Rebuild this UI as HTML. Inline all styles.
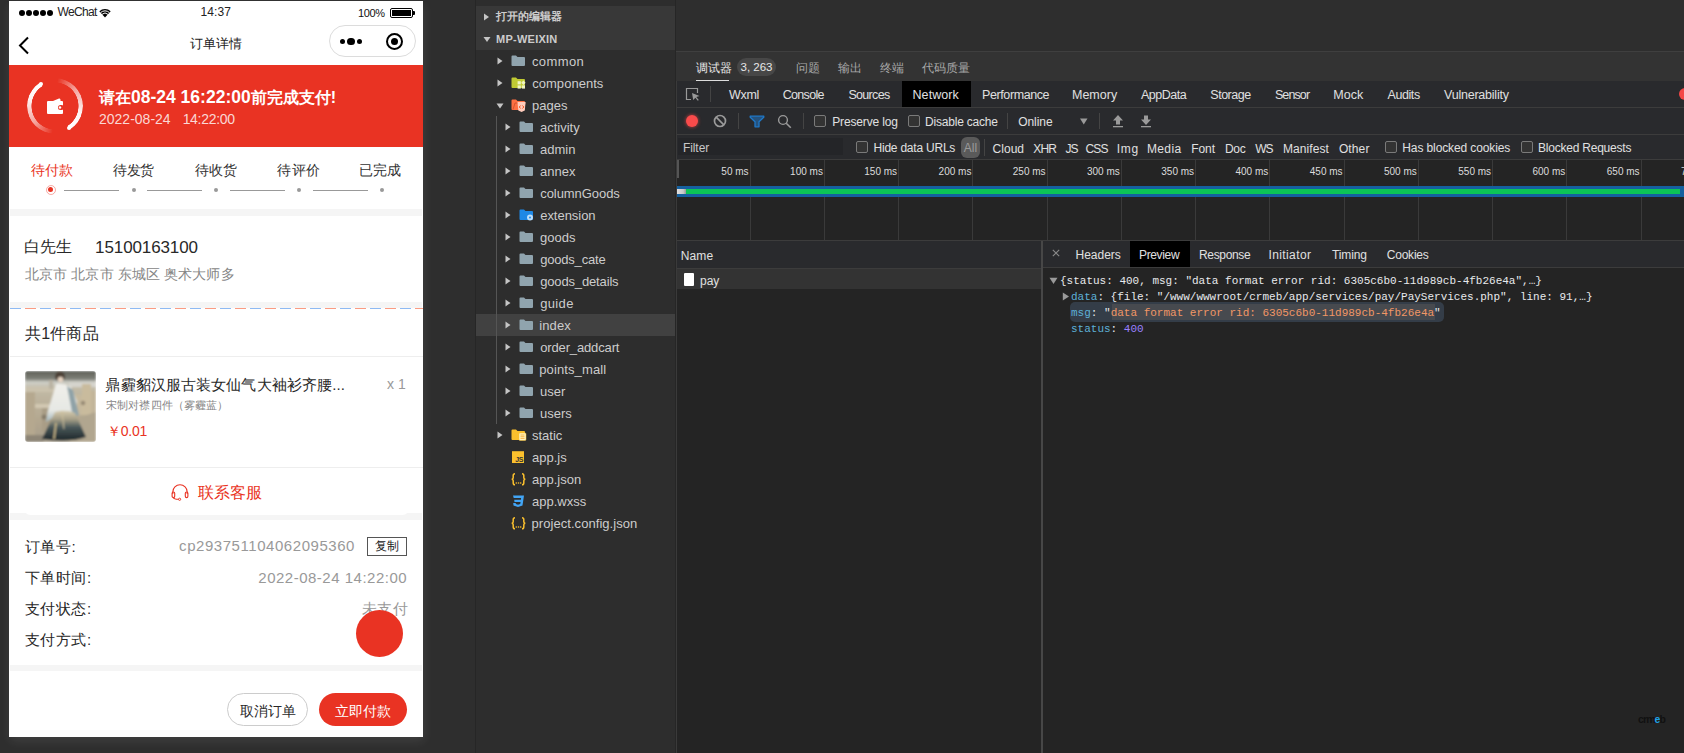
<!DOCTYPE html>
<html><head><meta charset="utf-8">
<style>
*{margin:0;padding:0;box-sizing:border-box}
html,body{width:1684px;height:753px;overflow:hidden;background:#2e2e2e;font-family:"Liberation Sans",sans-serif}
.a{position:absolute;white-space:nowrap}
#phone{position:absolute;left:9px;top:1px;width:414px;height:736px;background:#fff;overflow:hidden;box-shadow:1px 4px 10px rgba(255,255,255,.09)}
#phone .a{line-height:1}
.band{position:absolute;left:1px;width:412px;background:#f5f5f5}
.sd{display:inline-block;width:6px;height:6px;border-radius:3px;background:#000;margin-right:1px}
.ring{border-radius:50%;background:conic-gradient(rgba(255,255,255,0) 5deg,rgba(255,255,255,.55) 50deg,rgba(255,255,255,.95) 105deg,#fff 148deg,rgba(255,255,255,0) 148.5deg,rgba(255,255,255,0) 185deg,rgba(255,255,255,.55) 230deg,rgba(255,255,255,.95) 285deg,#fff 328deg,rgba(255,255,255,0) 328.5deg);-webkit-mask:radial-gradient(circle,transparent 23.3px,#000 23.8px,#000 28px,transparent 28.5px);mask:radial-gradient(circle,transparent 23.3px,#000 23.8px,#000 28px,transparent 28.5px)}
.dash{background:repeating-linear-gradient(90deg,#8fbaf3 0,#8fbaf3 11px,transparent 11px,transparent 15px,#fb9c83 15px,#fb9c83 26px,transparent 26px,transparent 30px)}
.goodsimg{background:linear-gradient(180deg,#7d7a70 0%,#bdb8a8 20%,#cfc8b5 45%,#9c9585 75%,#8a8478 100%)}
.tab{top:162px;width:80px;text-align:center;font-size:14px;color:#333}
.tr{font-size:13px;color:#cccccc;line-height:22px}
.dt{font-size:12px;color:#e0e0e0;line-height:16px}
.cb{width:12px;height:12px;border:1px solid #7a7a7a;border-radius:2px;background:#333}
.tl{width:60px;text-align:right;font-size:10px;color:#dcdcdc;line-height:12px}
.mono{font-family:"Liberation Mono",monospace;font-size:11px;line-height:16px}
</style></head><body>
<div id="phone">
  <!-- status bar -->
  <div class="a" style="left:10px;top:9px;font-size:0">
    <span class="sd"></span><span class="sd"></span><span class="sd"></span><span class="sd"></span><span class="sd" style="margin:0"></span>
  </div>
  <div class="a" style="left:48.6px;top:5px;font-size:12px;color:#222;letter-spacing:-0.70px">WeChat</div>
  <svg class="a" style="left:90px;top:7px" width="12" height="10" viewBox="0 0 12 10"><path d="M6 9.5 L0.3 3.2 A8.2 8.2 0 0 1 11.7 3.2 Z" fill="#000"/><path d="M1.6 4.6 A6.4 6.4 0 0 1 10.4 4.6" fill="none" stroke="#fff" stroke-width="1"/><path d="M3.1 6.3 A4.2 4.2 0 0 1 8.9 6.3" fill="none" stroke="#fff" stroke-width="1"/></svg>
  <div class="a" style="left:191.5px;top:5px;font-size:12px;color:#222;letter-spacing:0.12px">14:37</div>
  <div class="a" style="left:349.0px;top:7px;font-size:11px;color:#111;letter-spacing:-0.33px">100%</div>
  <div class="a" style="left:381px;top:7px;width:23px;height:10px;border:1px solid #000;border-radius:2px;padding:1px"><div style="width:100%;height:100%;background:#000"></div></div>
  <div class="a" style="left:404px;top:10px;width:2px;height:4px;background:#000;border-radius:0 1px 1px 0"></div>
  <!-- nav -->
  <svg class="a" style="left:9px;top:35px" width="12" height="20" viewBox="0 0 12 20"><path d="M10 1.5 L2 9.5 L10 17.5" fill="none" stroke="#000" stroke-width="2"/></svg>
  <div class="a" style="left:181.2px;top:36px;font-size:13px;color:#222">订单详情</div>
  <div class="a" style="left:320px;top:24px;width:87px;height:32px;border:1px solid #dcdcdc;border-radius:16px;background:#fff"></div>
  <div class="a" style="left:331px;top:38px;width:5px;height:5px;border-radius:50%;background:#000"></div>
  <div class="a" style="left:338px;top:36.6px;width:7.5px;height:7.5px;border-radius:50%;background:#000"></div>
  <div class="a" style="left:348px;top:38px;width:5px;height:5px;border-radius:50%;background:#000"></div>
  <div class="a" style="left:377px;top:32px;width:17px;height:17px;border-radius:50%;border:2px solid #000"></div>
  <div class="a" style="left:382px;top:37px;width:7px;height:7px;border-radius:50%;background:#000"></div>
  <!-- red banner -->
  <div class="a" style="left:0;top:64px;width:414px;height:82px;background:#e93323"></div>
  <div class="a ring" style="left:18px;top:77px;width:56px;height:56px"></div><div class="a" style="left:29.9px;top:80.7px;width:4.6px;height:4.6px;border-radius:50%;background:#fff"></div><div class="a" style="left:57.5px;top:124.8px;width:4.6px;height:4.6px;border-radius:50%;background:#fff"></div>
  <div class="a" style="left:47px;top:99px;width:4px;height:3px;background:#fff;border-radius:2px 2px 0 0;transform:skewX(-20deg)"></div>
  <svg class="a" style="left:37px;top:96px" width="18" height="18" viewBox="0 0 18 18"><path d="M7 4 L13 1.5 Q14.5 1 14.5 3 L14.5 4 Z" fill="#fff"/><rect x="1" y="4" width="16" height="13" rx="1" fill="#fff"/><rect x="12" y="8" width="6" height="5" rx="2.5" fill="#e93323"/><circle cx="14" cy="10.5" r="1.2" fill="#fff"/></svg>
  <div class="a" style="left:90px;top:88px;font-size:16px;font-weight:bold;color:#fff">请在<span style="font-size:17.5px">08-24 16:22:00</span>前完成支付!</div>
  <div class="a" style="left:90px;top:111px;font-size:14px;color:rgba(255,255,255,.82)">2022-08-24<span style="margin-left:12px;letter-spacing:-0.3px">14:22:00</span></div>
  <!-- tabs -->
  <div class="a tab" style="left:3.2px;color:#e93323;letter-spacing:0.30px">待付款</div><div class="a tab" style="left:84.6px;letter-spacing:-0.20px">待发货</div><div class="a tab" style="left:167px">待收货</div><div class="a tab" style="left:250.0px;letter-spacing:0.70px">待评价</div><div class="a tab" style="left:330.5px">已完成</div>
  <div class="a" style="left:36.5px;top:183.5px;width:10px;height:10px;border-radius:50%;border:1px solid rgba(233,51,35,.4)"></div>
  <div class="a" style="left:39px;top:186px;width:5px;height:5px;border-radius:50%;background:#e93323"></div>
  <div class="a" style="left:205px;top:187px;width:4px;height:4px;border-radius:50%;background:#999"></div>
  <div class="a" style="left:122.5px;top:187px;width:4px;height:4px;border-radius:50%;background:#999"></div>
  <div class="a" style="left:288px;top:187px;width:4px;height:4px;border-radius:50%;background:#999"></div>
  <div class="a" style="left:370.5px;top:187px;width:4px;height:4px;border-radius:50%;background:#999"></div>
  <div class="a" style="left:55px;top:189px;width:55px;height:1px;background:#999"></div>
  <div class="a" style="left:138px;top:189px;width:55px;height:1px;background:#999"></div>
  <div class="a" style="left:221px;top:189px;width:55px;height:1px;background:#999"></div>
  <div class="a" style="left:304px;top:189px;width:55px;height:1px;background:#999"></div>
  <div class="band" style="top:208px;height:7px"></div>
  <!-- address -->
  <div class="a" style="left:15.0px;top:238px;font-size:16px;color:#282828">白先生</div>
  <div class="a" style="left:86.1px;top:238px;font-size:17px;color:#282828;letter-spacing:-0.11px">15100163100</div>
  <div class="a" style="left:16.0px;top:266px;font-size:14px;color:#868686;letter-spacing:0.12px">北京市 北京市 东城区 奥术大师多</div>
  <div class="band" style="top:301px;height:6px"></div>
  <div class="a dash" style="left:1px;top:307px;width:413px;height:1px"></div>
  <!-- goods -->
  <div class="a" style="left:16.0px;top:325px;font-size:16px;color:#282828;letter-spacing:0.20px">共1件商品</div>
  <div class="a" style="left:1px;top:355px;width:413px;height:1px;background:#eee"></div>
  <svg class="a" style="left:16px;top:370px;border-radius:3px" width="71" height="71" viewBox="0 0 71 71"><defs><filter id="bl"><feGaussianBlur stdDeviation="1"/></filter><linearGradient id="sk" x1="0" y1="0" x2="0" y2="1"><stop offset="0" stop-color="#d7ccb0"/><stop offset="0.3" stop-color="#a29c85"/><stop offset="0.55" stop-color="#4a585a"/><stop offset="1" stop-color="#1c2629"/></linearGradient><linearGradient id="sl" x1="0" y1="0" x2="0" y2="1"><stop offset="0" stop-color="#f0efea"/><stop offset="0.7" stop-color="#e6e8e4"/><stop offset="1" stop-color="#9fb3b8"/></linearGradient><linearGradient id="bgg" x1="0" y1="0" x2="0" y2="1"><stop offset="0" stop-color="#5f6159"/><stop offset="0.11" stop-color="#7e7f77"/><stop offset="0.16" stop-color="#cfd0c9"/><stop offset="0.25" stop-color="#c2baa6"/><stop offset="0.7" stop-color="#b3a78f"/><stop offset="1" stop-color="#a69d8b"/></linearGradient></defs><g filter="url(#bl)"><rect width="71" height="71" fill="url(#bgg)"/><rect x="0" y="19" width="10" height="47" fill="#b5a88f"/><rect x="0" y="16" width="34" height="5" fill="#cbc2ad"/><rect x="10" y="33" width="22" height="4" fill="#d2c8b2"/><rect x="17" y="37" width="12" height="24" fill="#a99d86"/><circle cx="19" cy="46" r="2.5" fill="#857b69"/><rect x="24" y="9" width="4" height="9" fill="#bab3a3"/><rect x="44" y="11" width="27" height="5" fill="#d5d4cd"/><rect x="57" y="13" width="9" height="31" fill="#c9bb9d"/><rect x="66" y="20" width="5" height="22" fill="#c2b59a"/><rect x="50" y="24" width="7" height="20" fill="#c6b99e"/><circle cx="58" cy="32" r="2.3" fill="#978b75"/><path d="M48 50 Q60 44 71 41 V71 H44Z" fill="#b1a68f"/><path d="M0 64 H22 L18 71 H0Z" fill="#8d8576"/><circle cx="35" cy="5.5" r="5" fill="#4d4237"/><circle cx="35.5" cy="8.5" r="2.8" fill="#e5d2c0"/><path d="M31 13 Q39 12 46 16 L52 30 L50 45 L40 42 L29 46 L21 51 Q22 40 26 30Z" fill="url(#sl)"/><path d="M42 15 L48 19 L54 44 L48 46Z" fill="#8fa2a7"/><path d="M30 41 Q41 38 50 42 L61 66 Q45 72 17 68 Z" fill="url(#sk)"/><path d="M31 52 L29 68" stroke="#cdbb8c" stroke-width="1.6"/><path d="M37 40 L39 58" stroke="#cdbf9c" stroke-width="1"/></g></svg>
  <div class="a" style="left:96.4px;top:376px;font-size:15px;color:#282828;letter-spacing:0.12px">鼎霾貂汉服古装女仙气大袖衫齐腰...</div>
  <div class="a" style="left:378.0px;top:376px;font-size:14px;color:#999">x 1</div>
  <div class="a" style="left:97.0px;top:399px;font-size:11px;color:#868686;letter-spacing:0.15px">宋制对襟四件（雾霾蓝）</div>
  <div class="a" style="left:98.0px;top:423px;font-size:14px;color:#e93323;letter-spacing:-0.25px">￥0.01</div>
  <div class="a" style="left:1px;top:466px;width:413px;height:1px;background:#eee"></div>
  <!-- contact -->
  <svg class="a" style="left:162px;top:482px" width="18" height="18" viewBox="0 0 18 18"><path d="M1.8 11 V9 A7.2 7.2 0 0 1 16.2 9 V11" fill="none" stroke="#e93323" stroke-width="1.1"/><rect x="1.1" y="9" width="2.6" height="5.6" rx="1.3" fill="none" stroke="#e93323" stroke-width="1.1"/><rect x="14.3" y="9" width="2.6" height="5.6" rx="1.3" fill="none" stroke="#e93323" stroke-width="1.1"/><path d="M2.4 14.6 Q3 16.3 7.5 16.3" fill="none" stroke="#e93323" stroke-width="1.1"/><circle cx="8.6" cy="16.3" r="1.1" fill="none" stroke="#e93323" stroke-width="0.9"/></svg>
  <div class="a" style="left:188.8px;top:484px;font-size:16px;color:#e93323;letter-spacing:0.06px">联系客服</div>
  <div class="band" style="top:512px;height:7px"></div>
  <div class="a" style="left:14px;top:506px;width:387px;height:8px;background:#fff;border-radius:0 0 8px 8px"></div>
  <!-- order info -->
  <div class="a" style="left:15.7px;top:538px;font-size:15px;color:#282828;letter-spacing:0.57px">订单号:</div>
  <div class="a" style="left:15.7px;top:569px;font-size:15px;color:#282828;letter-spacing:0.55px">下单时间:</div>
  <div class="a" style="left:15.7px;top:600px;font-size:15px;color:#282828;letter-spacing:0.55px">支付状态:</div>
  <div class="a" style="left:15.7px;top:631px;font-size:15px;color:#282828;letter-spacing:0.55px">支付方式:</div>
  <div class="a" style="right:68.0px;top:537px;font-size:15px;color:#999;letter-spacing:0.55px">cp293751104062095360</div>
  <div class="a" style="left:358px;top:536px;width:40px;height:19px;border:1px solid #555;font-size:12px;line-height:17px;text-align:center;color:#222">复制</div>
  <div class="a" style="right:15.9px;top:569px;font-size:15px;color:#999;letter-spacing:0.50px">2022-08-24 14:22:00</div>
  <div class="a" style="right:14.3px;top:600px;font-size:15px;color:#999;letter-spacing:0.60px">未支付</div>
  <div class="a" style="left:347px;top:609px;width:47px;height:47px;border-radius:50%;background:#e93323"></div>
  <div class="band" style="top:664px;height:6px"></div>
  <!-- bottom buttons -->
  <div class="a" style="left:218px;top:692px;width:81px;height:33px;border:1px solid #ccc;border-radius:17px;font-size:14px;line-height:34px;text-align:center;color:#282828">取消订单</div>
  <div class="a" style="left:310px;top:692px;width:88px;height:33px;border-radius:17px;background:#e93323;font-size:14px;line-height:36px;text-align:center;color:#fff">立即付款</div>
</div>
<!-- separator -->
<div class="a" style="left:475px;top:0;width:1px;height:753px;background:#262626"></div>
<!-- tree panel -->
<div class="a" style="left:476px;top:0;width:199px;height:753px;background:#2d2d2d"></div>
<div class="a" style="left:476px;top:6px;width:199px;height:44px;background:#383838"></div>
<div class="a" style="left:675px;top:0;width:1px;height:753px;background:#262626"></div>
<svg class="a" style="left:483px;top:13px" width="7" height="8"><path d="M1 0.5 L6 4 L1 7.5Z" fill="#c5c5c5"/></svg>
<div class="a tr" style="left:496px;top:5px;font-size:11px;font-weight:bold;color:#ccc;line-height:22px">打开的编辑器</div>
<svg class="a" style="left:483px;top:36px" width="8" height="7"><path d="M0.5 1 L7.5 1 L4 6Z" fill="#c5c5c5"/></svg>
<div class="a tr" style="left:496.0px;top:28px;font-size:11px;font-weight:bold;color:#ccc;line-height:22px;letter-spacing:0.25px">MP-WEIXIN</div>
<div class="a" style="left:476px;top:314px;width:199px;height:22px;background:#414141"></div>
<div class="a" style="left:496px;top:116px;width:1px;height:308px;background:#555"></div>
<svg class="a" style="left:497px;top:56.5px" width="6" height="8"><path d="M0.5 0.5 L5.5 4 L0.5 7.5Z" fill="#c5c5c5"/></svg>
<svg class="a" style="left:511px;top:55.3px" width="15" height="13" viewBox="0 0 15 13"><path d="M0.5 1.5 Q0.5 0.5 1.5 0.5 H5 L6.5 2 H13 Q14 2 14 3 V10 Q14 11 13 11 H1.5 Q0.5 11 0.5 10Z" fill="#90a4ae"/></svg>
<div class="a tr" style="left:531.9px;top:50.5px;letter-spacing:0.42px">common</div>
<svg class="a" style="left:497px;top:78.5px" width="6" height="8"><path d="M0.5 0.5 L5.5 4 L0.5 7.5Z" fill="#c5c5c5"/></svg>
<svg class="a" style="left:511px;top:77.3px" width="16" height="14" viewBox="0 0 16 14" overflow="visible"><path d="M0.5 1.5 Q0.5 0.5 1.5 0.5 H5 L6.5 2 H13 Q14 2 14 3 V10 Q14 11 13 11 H1.5 Q0.5 11 0.5 10Z" fill="#c0ca33"/><rect x="6.6" y="4.2" width="3.2" height="3.2" fill="#f0f4c3"/><path d="M12.4 3.6 L14.6 5.8 L12.4 8 L10.2 5.8Z" fill="#f0f4c3"/><rect x="6.6" y="8.4" width="3.2" height="3.2" fill="#f0f4c3"/><rect x="10.8" y="8.4" width="3.2" height="3.2" fill="#f0f4c3"/></svg>
<div class="a tr" style="left:532.2px;top:72.5px;letter-spacing:0.04px">components</div>
<svg class="a" style="left:496px;top:102.5px" width="8" height="6"><path d="M0.5 0.5 H7.5 L4 5.5Z" fill="#c5c5c5"/></svg>
<svg class="a" style="left:511px;top:99.3px" width="16" height="14" viewBox="0 0 16 14" overflow="visible"><path d="M0.5 1.5 Q0.5 0.5 1.5 0.5 H5 L6.5 2 H13 Q14 2 14 3 V10 Q14 11 13 11 H1.5 Q0.5 11 0.5 10Z" fill="#ff7043"/><path d="M2 10.5 L4 4 H14 V5" fill="none" stroke="#c8502c" stroke-width="0.8"/><path d="M6.5 3 H14.6 L13.8 11.5 L10.55 13 L7.3 11.5Z" fill="#ffccbc"/><path d="M9.6 6.5 L8.3 8 L9.6 9.5 M11.5 6.5 L12.8 8 L11.5 9.5" stroke="#f4511e" stroke-width="1" fill="none"/></svg>
<div class="a tr" style="left:532px;top:94.5px">pages</div>
<svg class="a" style="left:505px;top:122.5px" width="6" height="8"><path d="M0.5 0.5 L5.5 4 L0.5 7.5Z" fill="#c5c5c5"/></svg>
<svg class="a" style="left:519px;top:121.3px" width="15" height="13" viewBox="0 0 15 13"><path d="M0.5 1.5 Q0.5 0.5 1.5 0.5 H5 L6.5 2 H13 Q14 2 14 3 V10 Q14 11 13 11 H1.5 Q0.5 11 0.5 10Z" fill="#90a4ae"/></svg>
<div class="a tr" style="left:540px;top:116.5px">activity</div>
<svg class="a" style="left:505px;top:144.5px" width="6" height="8"><path d="M0.5 0.5 L5.5 4 L0.5 7.5Z" fill="#c5c5c5"/></svg>
<svg class="a" style="left:519px;top:143.3px" width="15" height="13" viewBox="0 0 15 13"><path d="M0.5 1.5 Q0.5 0.5 1.5 0.5 H5 L6.5 2 H13 Q14 2 14 3 V10 Q14 11 13 11 H1.5 Q0.5 11 0.5 10Z" fill="#90a4ae"/></svg>
<div class="a tr" style="left:540px;top:138.5px">admin</div>
<svg class="a" style="left:505px;top:166.5px" width="6" height="8"><path d="M0.5 0.5 L5.5 4 L0.5 7.5Z" fill="#c5c5c5"/></svg>
<svg class="a" style="left:519px;top:165.3px" width="15" height="13" viewBox="0 0 15 13"><path d="M0.5 1.5 Q0.5 0.5 1.5 0.5 H5 L6.5 2 H13 Q14 2 14 3 V10 Q14 11 13 11 H1.5 Q0.5 11 0.5 10Z" fill="#90a4ae"/></svg>
<div class="a tr" style="left:540px;top:160.5px">annex</div>
<svg class="a" style="left:505px;top:188.5px" width="6" height="8"><path d="M0.5 0.5 L5.5 4 L0.5 7.5Z" fill="#c5c5c5"/></svg>
<svg class="a" style="left:519px;top:187.3px" width="15" height="13" viewBox="0 0 15 13"><path d="M0.5 1.5 Q0.5 0.5 1.5 0.5 H5 L6.5 2 H13 Q14 2 14 3 V10 Q14 11 13 11 H1.5 Q0.5 11 0.5 10Z" fill="#90a4ae"/></svg>
<div class="a tr" style="left:540.2px;top:182.5px;letter-spacing:-0.06px">columnGoods</div>
<svg class="a" style="left:505px;top:210.5px" width="6" height="8"><path d="M0.5 0.5 L5.5 4 L0.5 7.5Z" fill="#c5c5c5"/></svg>
<svg class="a" style="left:519px;top:209.3px" width="15" height="13" viewBox="0 0 15 13"><path d="M0.5 1.5 Q0.5 0.5 1.5 0.5 H5 L6.5 2 H13 Q14 2 14 3 V10 Q14 11 13 11 H1.5 Q0.5 11 0.5 10Z" fill="#1e88e5"/><circle cx="11" cy="8.5" r="3" fill="#bbdefb"/><circle cx="11" cy="8.5" r="1" fill="#1e88e5"/></svg>
<div class="a tr" style="left:540.2px;top:204.5px;letter-spacing:-0.03px">extension</div>
<svg class="a" style="left:505px;top:232.5px" width="6" height="8"><path d="M0.5 0.5 L5.5 4 L0.5 7.5Z" fill="#c5c5c5"/></svg>
<svg class="a" style="left:519px;top:231.3px" width="15" height="13" viewBox="0 0 15 13"><path d="M0.5 1.5 Q0.5 0.5 1.5 0.5 H5 L6.5 2 H13 Q14 2 14 3 V10 Q14 11 13 11 H1.5 Q0.5 11 0.5 10Z" fill="#90a4ae"/></svg>
<div class="a tr" style="left:540px;top:226.5px">goods</div>
<svg class="a" style="left:505px;top:254.5px" width="6" height="8"><path d="M0.5 0.5 L5.5 4 L0.5 7.5Z" fill="#c5c5c5"/></svg>
<svg class="a" style="left:519px;top:253.3px" width="15" height="13" viewBox="0 0 15 13"><path d="M0.5 1.5 Q0.5 0.5 1.5 0.5 H5 L6.5 2 H13 Q14 2 14 3 V10 Q14 11 13 11 H1.5 Q0.5 11 0.5 10Z" fill="#90a4ae"/></svg>
<div class="a tr" style="left:540.2px;top:248.5px;letter-spacing:-0.20px">goods_cate</div>
<svg class="a" style="left:505px;top:276.5px" width="6" height="8"><path d="M0.5 0.5 L5.5 4 L0.5 7.5Z" fill="#c5c5c5"/></svg>
<svg class="a" style="left:519px;top:275.3px" width="15" height="13" viewBox="0 0 15 13"><path d="M0.5 1.5 Q0.5 0.5 1.5 0.5 H5 L6.5 2 H13 Q14 2 14 3 V10 Q14 11 13 11 H1.5 Q0.5 11 0.5 10Z" fill="#90a4ae"/></svg>
<div class="a tr" style="left:540.2px;top:270.5px;letter-spacing:-0.15px">goods_details</div>
<svg class="a" style="left:505px;top:298.5px" width="6" height="8"><path d="M0.5 0.5 L5.5 4 L0.5 7.5Z" fill="#c5c5c5"/></svg>
<svg class="a" style="left:519px;top:297.3px" width="15" height="13" viewBox="0 0 15 13"><path d="M0.5 1.5 Q0.5 0.5 1.5 0.5 H5 L6.5 2 H13 Q14 2 14 3 V10 Q14 11 13 11 H1.5 Q0.5 11 0.5 10Z" fill="#90a4ae"/></svg>
<div class="a tr" style="left:540.2px;top:292.5px;letter-spacing:0.34px">guide</div>
<svg class="a" style="left:505px;top:320.5px" width="6" height="8"><path d="M0.5 0.5 L5.5 4 L0.5 7.5Z" fill="#c5c5c5"/></svg>
<svg class="a" style="left:519px;top:319.3px" width="15" height="13" viewBox="0 0 15 13"><path d="M0.5 1.5 Q0.5 0.5 1.5 0.5 H5 L6.5 2 H13 Q14 2 14 3 V10 Q14 11 13 11 H1.5 Q0.5 11 0.5 10Z" fill="#90a4ae"/></svg>
<div class="a tr" style="left:539.2px;top:314.5px;letter-spacing:0.15px">index</div>
<svg class="a" style="left:505px;top:342.5px" width="6" height="8"><path d="M0.5 0.5 L5.5 4 L0.5 7.5Z" fill="#c5c5c5"/></svg>
<svg class="a" style="left:519px;top:341.3px" width="15" height="13" viewBox="0 0 15 13"><path d="M0.5 1.5 Q0.5 0.5 1.5 0.5 H5 L6.5 2 H13 Q14 2 14 3 V10 Q14 11 13 11 H1.5 Q0.5 11 0.5 10Z" fill="#90a4ae"/></svg>
<div class="a tr" style="left:540.2px;top:336.5px;letter-spacing:-0.14px">order_addcart</div>
<svg class="a" style="left:505px;top:364.5px" width="6" height="8"><path d="M0.5 0.5 L5.5 4 L0.5 7.5Z" fill="#c5c5c5"/></svg>
<svg class="a" style="left:519px;top:363.3px" width="15" height="13" viewBox="0 0 15 13"><path d="M0.5 1.5 Q0.5 0.5 1.5 0.5 H5 L6.5 2 H13 Q14 2 14 3 V10 Q14 11 13 11 H1.5 Q0.5 11 0.5 10Z" fill="#90a4ae"/></svg>
<div class="a tr" style="left:539.2px;top:358.5px;letter-spacing:0.12px">points_mall</div>
<svg class="a" style="left:505px;top:386.5px" width="6" height="8"><path d="M0.5 0.5 L5.5 4 L0.5 7.5Z" fill="#c5c5c5"/></svg>
<svg class="a" style="left:519px;top:385.3px" width="15" height="13" viewBox="0 0 15 13"><path d="M0.5 1.5 Q0.5 0.5 1.5 0.5 H5 L6.5 2 H13 Q14 2 14 3 V10 Q14 11 13 11 H1.5 Q0.5 11 0.5 10Z" fill="#90a4ae"/></svg>
<div class="a tr" style="left:540px;top:380.5px">user</div>
<svg class="a" style="left:505px;top:408.5px" width="6" height="8"><path d="M0.5 0.5 L5.5 4 L0.5 7.5Z" fill="#c5c5c5"/></svg>
<svg class="a" style="left:519px;top:407.3px" width="15" height="13" viewBox="0 0 15 13"><path d="M0.5 1.5 Q0.5 0.5 1.5 0.5 H5 L6.5 2 H13 Q14 2 14 3 V10 Q14 11 13 11 H1.5 Q0.5 11 0.5 10Z" fill="#90a4ae"/></svg>
<div class="a tr" style="left:540px;top:402.5px">users</div>
<svg class="a" style="left:497px;top:430.5px" width="6" height="8"><path d="M0.5 0.5 L5.5 4 L0.5 7.5Z" fill="#c5c5c5"/></svg>
<svg class="a" style="left:511px;top:429.3px" width="16" height="14" viewBox="0 0 16 14" overflow="visible"><path d="M0.5 1.5 Q0.5 0.5 1.5 0.5 H5 L6.5 2 H13 Q14 2 14 3 V10 Q14 11 13 11 H1.5 Q0.5 11 0.5 10Z" fill="#fbc02d"/><rect x="8" y="4" width="7" height="7.5" rx="1" fill="#fff3c4" stroke="#fbc02d" stroke-width="0.5"/><path d="M9.5 6 H13.5 M9.5 7.7 H13.5 M9.5 9.4 H13.5" stroke="#f9a825" stroke-width="0.8"/></svg>
<div class="a tr" style="left:532px;top:424.5px">static</div>
<svg class="a" style="left:511px;top:451.3px" width="16" height="14" viewBox="0 0 16 14" overflow="visible"><rect x="1" y="0.2" width="12" height="11.8" fill="#fbc02d"/><text x="4.2" y="11" font-size="7" font-family="Liberation Sans" font-weight="bold" fill="#333" letter-spacing="-0.4">JS</text></svg>
<div class="a tr" style="left:532px;top:446.5px">app.js</div>
<svg class="a" style="left:511px;top:473.3px" width="16" height="14" viewBox="0 0 16 14" overflow="visible"><path d="M4 0.8 Q2.2 0.8 2.2 2.6 V4.8 Q2.2 6 0.8 6.3 Q2.2 6.6 2.2 7.8 V10 Q2.2 11.8 4 11.8" fill="none" stroke="#fbc02d" stroke-width="1.5"/><path d="M11 0.8 Q12.8 0.8 12.8 2.6 V4.8 Q12.8 6 14.2 6.3 Q12.8 6.6 12.8 7.8 V10 Q12.8 11.8 11 11.8" fill="none" stroke="#fbc02d" stroke-width="1.5"/><circle cx="5.3" cy="10" r="0.8" fill="#fbc02d"/><circle cx="7.5" cy="10" r="0.8" fill="#fbc02d"/><circle cx="9.7" cy="10" r="0.8" fill="#fbc02d"/></svg>
<div class="a tr" style="left:532px;top:468.5px">app.json</div>
<svg class="a" style="left:511px;top:495.3px" width="15" height="13" viewBox="0 0 15 13"><path d="M2 0.5 H13 L11.5 10.5 L7 12 L2.5 10.5 L2.2 8 H4.7 L4.9 9 L7 9.7 L9.2 9 L9.6 7 H3.5 L3.2 4.8 H9.9 L10.1 3 H2.7Z" fill="#42a5f5"/></svg>
<div class="a tr" style="left:532px;top:490.5px">app.wxss</div>
<svg class="a" style="left:511px;top:517.3px" width="16" height="14" viewBox="0 0 16 14" overflow="visible"><path d="M4 0.8 Q2.2 0.8 2.2 2.6 V4.8 Q2.2 6 0.8 6.3 Q2.2 6.6 2.2 7.8 V10 Q2.2 11.8 4 11.8" fill="none" stroke="#fbc02d" stroke-width="1.5"/><path d="M11 0.8 Q12.8 0.8 12.8 2.6 V4.8 Q12.8 6 14.2 6.3 Q12.8 6.6 12.8 7.8 V10 Q12.8 11.8 11 11.8" fill="none" stroke="#fbc02d" stroke-width="1.5"/><circle cx="5.3" cy="10" r="0.8" fill="#fbc02d"/><circle cx="7.5" cy="10" r="0.8" fill="#fbc02d"/><circle cx="9.7" cy="10" r="0.8" fill="#fbc02d"/></svg>
<div class="a tr" style="left:531.6px;top:512.5px;letter-spacing:0.05px">project.config.json</div>
<!-- devtools -->
<div class="a" style="left:676px;top:0;width:1008px;height:51px;background:#2e2e2e"></div>
<div class="a" style="left:676px;top:51px;width:1008px;height:1px;background:#3f3f3f"></div>
<div class="a" style="left:676px;top:52px;width:1008px;height:29px;background:#333"></div>
<div class="a dt" style="left:696px;top:60px;font-size:11.5px;color:#e8e8e8;line-height:16px">调试器</div>
<div class="a" style="left:696px;top:79.5px;width:33px;height:1.5px;background:#ddd"></div>
<div class="a" style="left:737px;top:58px;width:39px;height:18px;border-radius:9px;background:#474747;font-size:11.5px;line-height:19px;text-align:center;color:#e8e8e8">3, 263</div>
<div class="a dt" style="left:796px;top:60px;font-size:11.5px;color:#a8a8a8;line-height:16px">问题</div>
<div class="a dt" style="left:838px;top:60px;font-size:11.5px;color:#a8a8a8;line-height:16px">输出</div>
<div class="a dt" style="left:880px;top:60px;font-size:11.5px;color:#a8a8a8;line-height:16px">终端</div>
<div class="a dt" style="left:922px;top:60px;font-size:11.5px;color:#a8a8a8;line-height:16px">代码质量</div>
<div class="a" style="left:676px;top:81px;width:1008px;height:672px;background:#292a2d"></div>
<div class="a" style="left:676px;top:81px;width:1px;height:672px;background:#3a3a3a"></div>
<!-- tab bar -->
<div class="a" style="left:902px;top:81px;width:69px;height:26px;background:#000"></div>
<svg class="a" style="left:685px;top:87px" width="16" height="14" viewBox="0 0 16 14"><path d="M6 12.5 H1.5 V1.5 H12.5 V6" fill="none" stroke="#9a9a9a" stroke-width="1.2"/><path d="M7 6 L14.5 9 L11.3 10 L13.8 13 L12.8 13.8 L10.4 10.8 L8.2 13Z" fill="#9a9a9a"/></svg>
<div class="a" style="left:710px;top:86px;width:1px;height:16px;background:#444"></div>
<div class="a dt" style="left:729.0px;top:86.5px;font-size:12.5px;letter-spacing:-0.33px">Wxml</div>
<div class="a dt" style="left:782.7px;top:86.5px;font-size:12.5px;letter-spacing:-0.67px">Console</div>
<div class="a dt" style="left:848.4px;top:86.5px;font-size:12.5px;letter-spacing:-0.68px">Sources</div>
<div class="a dt" style="left:912.5px;top:86.5px;font-size:12.5px;letter-spacing:0.08px">Network</div>
<div class="a dt" style="left:982.0px;top:86.5px;font-size:12.5px;letter-spacing:-0.40px">Performance</div>
<div class="a dt" style="left:1072.0px;top:86.5px;font-size:12.5px">Memory</div>
<div class="a dt" style="left:1141.0px;top:86.5px;font-size:12.5px;letter-spacing:-0.50px">AppData</div>
<div class="a dt" style="left:1210.3px;top:86.5px;font-size:12.5px;letter-spacing:-0.48px">Storage</div>
<div class="a dt" style="left:1274.9px;top:86.5px;font-size:12.5px;letter-spacing:-0.88px">Sensor</div>
<div class="a dt" style="left:1333.3px;top:86.5px;font-size:12.5px;letter-spacing:0.06px">Mock</div>
<div class="a dt" style="left:1387.5px;top:86.5px;font-size:12.5px;letter-spacing:-0.42px">Audits</div>
<div class="a dt" style="left:1444.0px;top:86.5px;font-size:12.5px;letter-spacing:-0.22px">Vulnerability</div>
<div class="a" style="left:677px;top:107px;width:1007px;height:1px;background:#3c3c3c"></div>
<!-- toolbar 2 -->
<div class="a" style="left:686px;top:115px;width:12px;height:12px;border-radius:50%;background:#fa4b4b;box-shadow:0 0 3px 1px rgba(244,71,71,.45)"></div>
<svg class="a" style="left:713px;top:114px" width="14" height="14" viewBox="0 0 14 14"><circle cx="7" cy="7" r="5.5" fill="none" stroke="#9a9a9a" stroke-width="1.7"/><path d="M3.2 3.2 L10.8 10.8" stroke="#9a9a9a" stroke-width="1.7"/></svg>
<div class="a" style="left:738px;top:113px;width:1px;height:16px;background:#444"></div>
<svg class="a" style="left:749px;top:115px" width="16" height="13" viewBox="0 0 16 13"><path d="M1.2 1.2 H14.8 V2.2 L10 6.8 V11.8 H6 V6.8 L1.2 2.2Z" fill="#24527e" stroke="#1f78c8" stroke-width="1.3" stroke-linejoin="round"/></svg>
<svg class="a" style="left:777px;top:114px" width="15" height="15" viewBox="0 0 15 15"><circle cx="6" cy="6" r="4.4" fill="none" stroke="#9a9a9a" stroke-width="1.4"/><path d="M9.2 9.2 L13.8 13.8" stroke="#9a9a9a" stroke-width="1.6"/></svg>
<div class="a" style="left:803px;top:113px;width:1px;height:16px;background:#444"></div>
<div class="a cb" style="left:814px;top:115px"></div>
<div class="a dt" style="left:832.2px;top:114px;letter-spacing:-0.15px">Preserve log</div>
<div class="a cb" style="left:908px;top:115px"></div>
<div class="a dt" style="left:925.0px;top:114px;letter-spacing:-0.20px">Disable cache</div>
<div class="a" style="left:1007px;top:113px;width:1px;height:16px;background:#444"></div>
<div class="a dt" style="left:1018.2px;top:114px;letter-spacing:-0.04px">Online</div>
<svg class="a" style="left:1080px;top:118px" width="8" height="7"><path d="M0 0.5 H7.5 L3.75 6.5Z" fill="#9a9a9a"/></svg>
<div class="a" style="left:1099px;top:113px;width:1px;height:16px;background:#444"></div>
<svg class="a" style="left:1112px;top:114px" width="12" height="14" viewBox="0 0 12 14"><path d="M6 1 L11 6.5 H8 V10.5 H4 V6.5 H1Z" fill="#9a9a9a"/><rect x="1" y="12" width="10" height="1.3" fill="#9a9a9a"/></svg>
<svg class="a" style="left:1140px;top:114px" width="12" height="14" viewBox="0 0 12 14"><path d="M6 11 L11 5.5 H8 V1.5 H4 V5.5 H1Z" fill="#9a9a9a"/><rect x="1" y="12" width="10" height="1.3" fill="#9a9a9a"/></svg>
<div class="a" style="left:677px;top:134px;width:1007px;height:1px;background:#3c3c3c"></div>
<!-- filter bar -->
<div class="a" style="left:678px;top:138px;width:165px;height:17px;background:#242528"></div>
<div class="a dt" style="left:682.9px;top:140px;color:#c8c8c8;letter-spacing:-0.06px">Filter</div>
<div class="a cb" style="left:856px;top:141px"></div>
<div class="a dt" style="left:873.5px;top:140px;letter-spacing:-0.22px">Hide data URLs</div>
<div class="a" style="left:961px;top:137px;width:19px;height:21px;border-radius:6px;background:#5a5a5a;font-size:12px;line-height:22px;text-align:center;color:#9a9a9a">All</div>
<div class="a" style="left:984px;top:139px;width:1px;height:17px;background:#444"></div>
<div class="a dt" style="left:992.6px;top:141px;letter-spacing:0.01px">Cloud</div>
<div class="a dt" style="left:1033.3px;top:141px;letter-spacing:-0.80px">XHR</div>
<div class="a dt" style="left:1065.4px;top:141px;letter-spacing:-0.90px">JS</div>
<div class="a dt" style="left:1085.6px;top:141px;letter-spacing:-0.90px">CSS</div>
<div class="a dt" style="left:1116.8px;top:141px;letter-spacing:0.70px">Img</div>
<div class="a dt" style="left:1147.0px;top:141px;letter-spacing:0.35px">Media</div>
<div class="a dt" style="left:1191.2px;top:141px;letter-spacing:-0.06px">Font</div>
<div class="a dt" style="left:1224.9px;top:141px;letter-spacing:-0.25px">Doc</div>
<div class="a dt" style="left:1255.2px;top:141px;letter-spacing:-0.90px">WS</div>
<div class="a dt" style="left:1282.9px;top:141px;letter-spacing:0.09px">Manifest</div>
<div class="a dt" style="left:1338.9px;top:141px;letter-spacing:0.12px">Other</div>
<div class="a cb" style="left:1385px;top:141px"></div>
<div class="a dt" style="left:1402.3px;top:140px;letter-spacing:-0.11px">Has blocked cookies</div>
<div class="a cb" style="left:1521px;top:141px"></div>
<div class="a dt" style="left:1538.0px;top:140px;letter-spacing:-0.22px">Blocked Requests</div>
<div class="a" style="left:1679px;top:88px;width:12px;height:12px;border-radius:50%;background:#f44747"></div>
<div class="a" style="left:677px;top:159px;width:1007px;height:1px;background:#3c3c3c"></div>
<!-- timeline -->
<div class="a" style="left:677px;top:160px;width:1007px;height:80px;background:#242424"></div>
<div class="a" style="left:677px;top:160px;width:2px;height:18px;background:#555"></div>
<div class="a" style="left:750px;top:160px;width:1px;height:80px;background:#3a3a3a"></div>
<div class="a tl" style="left:688.6px;top:166px">50 ms</div>
<div class="a" style="left:824px;top:160px;width:1px;height:80px;background:#3a3a3a"></div>
<div class="a tl" style="left:762.9px;top:166px">100 ms</div>
<div class="a" style="left:898px;top:160px;width:1px;height:80px;background:#3a3a3a"></div>
<div class="a tl" style="left:837.1px;top:166px">150 ms</div>
<div class="a" style="left:972px;top:160px;width:1px;height:80px;background:#3a3a3a"></div>
<div class="a tl" style="left:911.4px;top:166px">200 ms</div>
<div class="a" style="left:1047px;top:160px;width:1px;height:80px;background:#3a3a3a"></div>
<div class="a tl" style="left:985.6px;top:166px">250 ms</div>
<div class="a" style="left:1121px;top:160px;width:1px;height:80px;background:#3a3a3a"></div>
<div class="a tl" style="left:1059.8px;top:166px">300 ms</div>
<div class="a" style="left:1195px;top:160px;width:1px;height:80px;background:#3a3a3a"></div>
<div class="a tl" style="left:1134.1px;top:166px">350 ms</div>
<div class="a" style="left:1269px;top:160px;width:1px;height:80px;background:#3a3a3a"></div>
<div class="a tl" style="left:1208.3px;top:166px">400 ms</div>
<div class="a" style="left:1344px;top:160px;width:1px;height:80px;background:#3a3a3a"></div>
<div class="a tl" style="left:1282.6px;top:166px">450 ms</div>
<div class="a" style="left:1418px;top:160px;width:1px;height:80px;background:#3a3a3a"></div>
<div class="a tl" style="left:1356.8px;top:166px">500 ms</div>
<div class="a" style="left:1492px;top:160px;width:1px;height:80px;background:#3a3a3a"></div>
<div class="a tl" style="left:1431.1px;top:166px">550 ms</div>
<div class="a" style="left:1566px;top:160px;width:1px;height:80px;background:#3a3a3a"></div>
<div class="a tl" style="left:1505.3px;top:166px">600 ms</div>
<div class="a" style="left:1641px;top:160px;width:1px;height:80px;background:#3a3a3a"></div>
<div class="a tl" style="left:1579.6px;top:166px">650 ms</div>
<div class="a tl" style="left:1653.9px;top:166px">700 ms</div>
<div class="a" style="left:677px;top:186px;width:1007px;height:10.5px;background:#15609f"></div>
<div class="a" style="left:677px;top:188.5px;width:1003px;height:5px;background:#0cc457"></div>
<div class="a" style="left:677px;top:188.5px;width:9px;height:5px;background:linear-gradient(90deg,#e0e0e0,#c8c8c8 70%,#999)"></div>

<div class="a" style="left:677px;top:240px;width:1007px;height:1px;background:#3c3c3c"></div>
<!-- name list -->
<div class="a" style="left:677px;top:241px;width:365px;height:512px;background:#242424"></div>
<div class="a" style="left:677px;top:241px;width:365px;height:27px;background:#292a2d"></div>
<div class="a dt" style="left:680.8px;top:248px;color:#e0e0e0;letter-spacing:0.10px">Name</div>
<div class="a" style="left:677px;top:268px;width:365px;height:1px;background:#3c3c3c"></div>
<div class="a" style="left:677px;top:269px;width:365px;height:20px;background:#333"></div>
<div class="a" style="left:684px;top:273px;width:10px;height:13px;background:#fff;border-radius:1px"></div>
<div class="a dt" style="left:700px;top:273px;color:#e0e0e0">pay</div>
<div class="a" style="left:1041px;top:241px;width:2px;height:512px;background:#474747"></div>
<!-- preview -->
<div class="a" style="left:1043px;top:241px;width:641px;height:512px;background:#242424"></div>
<div class="a" style="left:1043px;top:241px;width:641px;height:26px;background:#292a2d"></div>
<svg class="a" style="left:1052px;top:249px" width="8" height="8"><path d="M0.8 0.8 L7.2 7.2 M7.2 0.8 L0.8 7.2" stroke="#8a8a8a" stroke-width="1.1"/></svg>
<div class="a" style="left:1130px;top:241px;width:60px;height:26px;background:#000"></div>
<div class="a dt" style="left:1075.6px;top:247px;letter-spacing:-0.03px">Headers</div>
<div class="a dt" style="left:1139.0px;top:247px;letter-spacing:-0.35px">Preview</div>
<div class="a dt" style="left:1199.0px;top:247px;letter-spacing:-0.34px">Response</div>
<div class="a dt" style="left:1268.5px;top:247px;letter-spacing:0.39px">Initiator</div>
<div class="a dt" style="left:1331.9px;top:247px;letter-spacing:-0.10px">Timing</div>
<div class="a dt" style="left:1386.7px;top:247px;letter-spacing:-0.20px">Cookies</div>
<div class="a" style="left:1043px;top:267px;width:641px;height:1px;background:#3c3c3c"></div>
<svg class="a" style="left:1049px;top:277px" width="9" height="8"><path d="M0.5 0.8 H8.5 L4.5 7Z" fill="#9a9a9a"/></svg>
<div class="a mono" style="left:1060px;top:272.5px;color:#e8eaed">{status: 400, msg: "data format error rid: 6305c6b0-11d989cb-4fb26e4a",…}</div>
<svg class="a" style="left:1062px;top:291.5px" width="8" height="9"><path d="M0.8 0.5 V8.5 L7 4.5Z" fill="#9a9a9a"/></svg>
<div class="a mono" style="left:1071px;top:288.5px;color:#e8eaed"><span style="color:#5db0d7">data</span>: {file: "/www/wwwroot/crmeb/app/services/pay/PayServices.php", line: 91,…}</div>
<div class="a" style="left:1070px;top:302px;width:374px;height:20px;border-radius:5px;background:#343d48"></div>
<div class="a" style="left:1111.5px;top:304px;width:323.5px;height:16px;background:#474a4f"></div>
<div class="a mono" style="left:1071px;top:304.5px;color:#e8eaed"><span style="color:#5db0d7">msg</span>: "<span style="color:#f29766">data format error rid: 6305c6b0-11d989cb-4fb26e4a</span>"</div>
<div class="a mono" style="left:1071px;top:320.5px;color:#e8eaed"><span style="color:#5db0d7">status</span>: <span style="color:#9980ff">400</span></div>
<!-- crmeb logo -->
<div class="a" style="left:1638px;top:712px;font-size:10.5px;font-weight:bold;color:#111;letter-spacing:-0.9px;line-height:14px">crm<span style="color:#1ea0e6">e</span>b</div>

</body></html>
